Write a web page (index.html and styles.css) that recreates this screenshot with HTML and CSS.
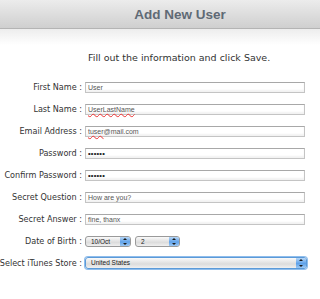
FILE: index.html
```html
<!DOCTYPE html>
<html lang="en">
<head>
    <meta charset="UTF-8">
    <meta name="viewport" content="width=device-width, initial-scale=1.0">
    <title>Add New User</title>
    <link rel="stylesheet" href="styles.css">
</head>
<body>
    <div class="header">
        <h1 class="title">Add New User</h1>
    </div>
    <div class="shade"></div>

    <p class="intro">Fill out the information and click Save.</p>

    <form class="form">
        <div class="row">
            <label class="label">First Name :</label>
            <div class="field">User</div>
        </div>
        <div class="row">
            <label class="label">Last Name :</label>
            <div class="field"><span class="typo">UserLastName</span></div>
        </div>
        <div class="row">
            <label class="label">Email Address :</label>
            <div class="field"><span class="typo">tuser</span>@mail.com</div>
        </div>
        <div class="row">
            <label class="label">Password :</label>
            <div class="field dots">&bull;&bull;&bull;&bull;&bull;&bull;</div>
        </div>
        <div class="row">
            <label class="label">Confirm Password :</label>
            <div class="field dots">&bull;&bull;&bull;&bull;&bull;&bull;</div>
        </div>
        <div class="row">
            <label class="label">Secret Question :</label>
            <div class="field">How are you?</div>
        </div>
        <div class="row">
            <label class="label">Secret Answer :</label>
            <div class="field">fine, thanx</div>
        </div>
        <div class="row">
            <label class="label">Date of Birth :</label>
            <div class="select month">10/Oct<span class="arrows"></span></div>
            <div class="select day">2<span class="arrows"></span></div>
        </div>
        <div class="row">
            <label class="label">Select iTunes Store :</label>
            <div class="select store focused">United States<span class="arrows"></span></div>
        </div>
    </form>
</body>
</html>
```

FILE: styles.css
```css
body {
    margin: 0;
    background: #fff;
    font-family: 'DejaVu Sans', Verdana, sans-serif;
    color: #333;
    overflow: hidden;
}

.header {
    height: 28px;
    background: linear-gradient(#ececec, #cfcfcf);
    border-bottom: 1px solid #b4b4b4;
    display: flex;
    align-items: center;
    justify-content: center;
    padding-left: 40px;
}

.title {
    margin: 0;
    font-family: 'Liberation Sans', Arial, sans-serif;
    font-size: 13.5px;
    font-weight: bold;
    color: #5f6a75;
}

.shade {
    height: 16px;
    background: linear-gradient(#ededed, #fff);
}

.intro {
    margin: 7px 0 0 88px;
    font-size: 9.5px;
    color: #333;
    line-height: 12px;
}

.form {
    margin-top: 12px;
    display: flex;
    flex-direction: column;
}

.row {
    height: 22px;
    display: flex;
    align-items: center;
    gap: 3px;
}

.label {
    width: 82px;
    flex: none;
    display: flex;
    justify-content: flex-end;
    font-size: 8.1px;
    white-space: nowrap;
    color: #333;
}

.field {
    width: 214px;
    height: 9px;
    border: 1px solid #c4c4c4;
    border-top-color: #a8a8a8;
    padding: 0 2px;
    background: #fff;
    font-family: 'Liberation Sans', Arial, sans-serif;
    font-size: 7px;
    line-height: 9px;
    color: #555;
    box-shadow: inset 0 -2px 2px #f2f2f2;
}

.typo {
    text-decoration: underline wavy #e33;
    text-decoration-thickness: 0.8px;
    text-underline-offset: 1px;
}

.dots {
    font-size: 7.5px;
    font-weight: bold;
    color: #222;
    letter-spacing: 0.2px;
}

.select {
    position: relative;
    height: 9px;
    border: 1px solid #9a9a9a;
    border-radius: 3px;
    background: linear-gradient(#fafafa, #dcdcdc 60%, #f0f0f0);
    font-family: 'Liberation Sans', Arial, sans-serif;
    font-size: 6.5px;
    line-height: 9px;
    padding-left: 5px;
    color: #222;
}

.month {
    width: 39px;
}

.day {
    width: 38px;
    margin-left: 1px;
}

.store {
    width: 215px;
    height: 10px;
    line-height: 10px;
}

.focused {
    border-color: #5b9ad8;
    box-shadow: 0 0 0 1px #8fbdec;
}

.arrows {
    position: absolute;
    right: 0;
    top: 0;
    bottom: 0;
    width: 10px;
    border-radius: 0 2px 2px 0;
    background: linear-gradient(#b6d6f7, #5fa2ea 55%, #9cc8f3);
}

.arrows::before,
.arrows::after {
    content: "";
    position: absolute;
    left: 3px;
    border-left: 2px solid transparent;
    border-right: 2px solid transparent;
}

.arrows::before {
    top: 1px;
    border-bottom: 2px solid #1a1a1a;
}

.arrows::after {
    bottom: 1px;
    border-top: 2px solid #1a1a1a;
}
```
